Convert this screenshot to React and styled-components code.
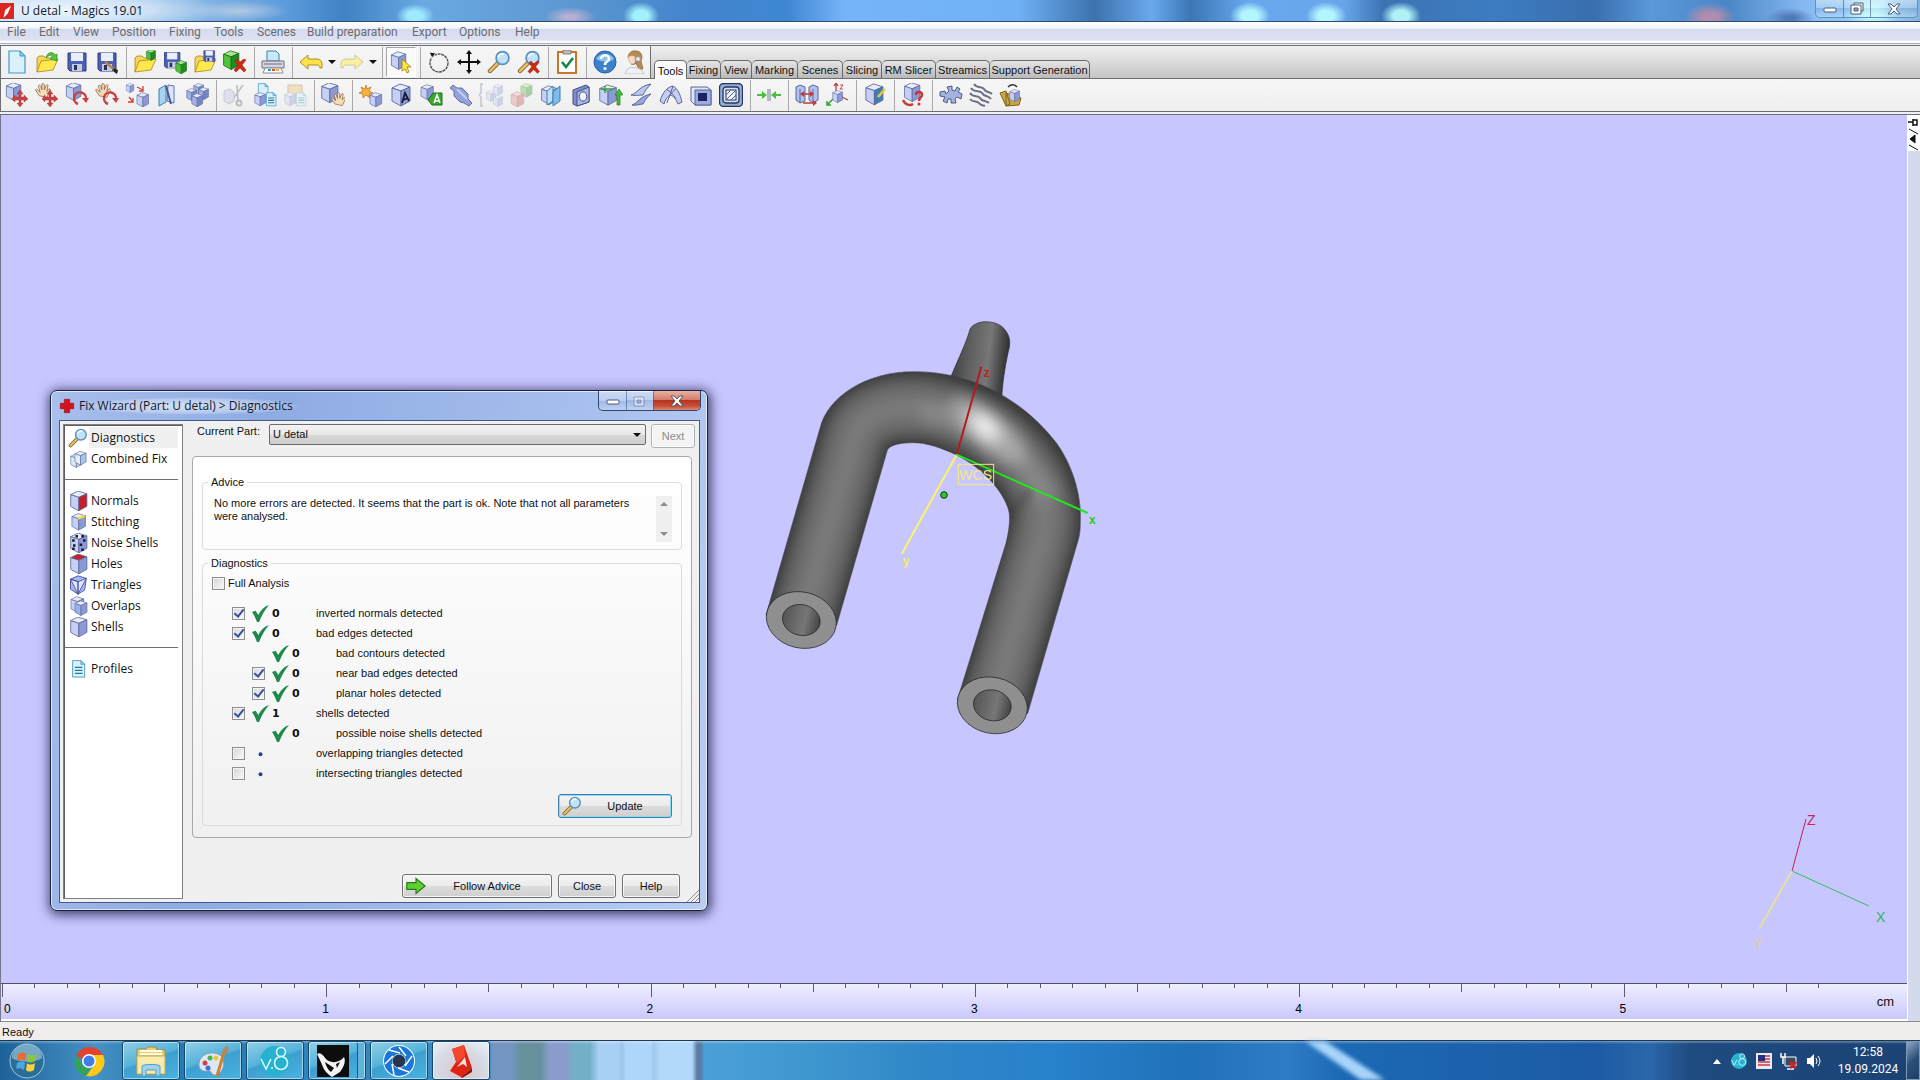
import React from 'react';
import styled, { createGlobalStyle, css } from 'styled-components';

const GlobalStyle = createGlobalStyle`
  * { box-sizing: border-box; }
  body {
    margin: 0;
    background: #f0f0f0;
    color: #111;
    font: 11px/13px "Liberation Sans", Arial, sans-serif;
  }
  button, select, input { font: inherit; color: inherit; margin: 0; }
`;

const uiFont = '"Open Sans", "Noto Sans", sans-serif';

/* ---------- icon parts, all on a 24 x 24 grid ---------- */

const Icon = styled.svg.attrs({ viewBox: '0 0 24 24', 'aria-hidden': true })`
  width: ${({ $size }) => $size || 24}px;
  height: ${({ $size }) => $size || 24}px;
  flex: none;
  display: block;
  opacity: ${({ $faded }) => ($faded ? 0.35 : 1)};
`;

const Cube = ({ x = 0, y = 0, s = 1, top = '#e6ecfd', left = '#c6cff6', right = '#8b99d6', line = '#5a6696' }) => (
  <g transform={`translate(${x} ${y}) scale(${s})`} stroke={line} strokeWidth="0.9" strokeLinejoin="round">
    <path d="M3 5 11 1 21 4 12 8Z" fill={top} />
    <path d="M3 5 12 8V23L3 18Z" fill={left} />
    <path d="M12 8 21 4V18L12 23Z" fill={right} />
  </g>
);

const GreenCube = (props) => <Cube top="#a6e88a" left="#4fc13a" right="#1f8c22" line="#17641b" {...props} />;

const Folder = ({ x = 0, y = 0, s = 1 }) => (
  <g transform={`translate(${x} ${y}) scale(${s})`} stroke="#a8851b" strokeWidth="0.8" strokeLinejoin="round">
    <path d="M2 22V8L4 6H9L11 8H18V12" fill="#f3d65a" />
    <path d="M2 22 6 11 23 9 18 20Z" fill="#ffe94f" />
  </g>
);

const Floppy = ({ x = 0, y = 0, s = 1 }) => (
  <g transform={`translate(${x} ${y}) scale(${s})`}>
    <path d="M3 3H21V21H5L3 19Z" fill="#4f60b4" stroke="#2c3a7c" />
    <path d="M6 3H18V11H6Z" fill="#e9eefb" />
    <path d="M7 14H17V21H7Z" fill="#c6cce0" />
    <path d="M9 15H12V20H9Z" fill="#27315f" />
  </g>
);

const RedX = ({ x = 0, y = 0, s = 1 }) => (
  <path
    transform={`translate(${x} ${y}) scale(${s})`}
    d="M1 2 3 0 6 3 10 0 12 1 8 6 12 11 10 13 6 9 2 13 0 11 4 6Z"
    fill="#cf2a12"
    stroke="#8e1a0c"
    strokeWidth="0.5"
  />
);

const RedMove = () => (
  <path
    d="M15 7 18 11H16V14H19V12L23 16 19 19V17H16V20H18L15 24 12 20H14V17H10V19L7 16 10 12V14H14V11H12Z"
    fill="#c94141"
    stroke="#a22c2c"
    strokeWidth="0.4"
  />
);

const RedTurn = () => (
  <g fill="none" stroke="#c84242" strokeWidth="2.4">
    <path d="M13 21A6 6 0 1 1 21 16" />
    <path d="M17 15H24L21 20Z" fill="#c84242" stroke="none" />
  </g>
);

const Hand = ({ x = 0, y = 0, s = 1 }) => (
  <path
    transform={`translate(${x} ${y}) scale(${s})`}
    d="M5 15 1 9C0 7 2 7 3 8L6 11 4 4C4 2 6 2 7 4L8 8V2C8 0 10 0 11 2V8L13 3C14 1 16 2 15 4L14 10 16 7C18 6 18 8 18 9L14 17Z"
    fill="#f7dcbb"
    stroke="#8a6344"
    strokeWidth="0.9"
    strokeLinejoin="round"
  />
);

const Lens = () => (
  <g>
    <path d="M11 13 3 21" stroke="#7a5d1e" strokeWidth="4.4" strokeLinecap="round" />
    <path d="M11 13 3 21" stroke="#e2bd6a" strokeWidth="2.8" strokeLinecap="round" />
    <circle cx="15.500" cy="8" r="6.400" fill="#bfe3fb" stroke="#5c8fc0" strokeWidth="1.700" />
    <path d="M11.500 7A4.500 4.500 0 0 1 17 4" fill="none" stroke="#fff" strokeWidth="1.600" />
  </g>
);

const Page = ({ x = 0, y = 0, s = 1, lines }) => (
  <g transform={`translate(${x} ${y}) scale(${s})`}>
    <path d="M4 1H15L20 6V23H4Z" fill="#d9f1fb" stroke="#3f9ac4" strokeWidth="1.200" />
    <path d="M15 1V6H20Z" fill="#8ccdea" stroke="#3f9ac4" />
    {lines && <path d="M7 10H17M7 14H17M7 18H17" stroke="#257b9e" strokeWidth="1.800" />}
  </g>
);

const icons = {
  newFile: <Page />,
  open: (
    <>
      <Folder />
      <path d="M11 8C12 2 18 1 20 5L22 4V11L15 9 17 7C16 4 14 5 11 8Z" fill="#58c63c" stroke="#2d8722" strokeWidth="0.7" />
    </>
  ),
  save: <Floppy />,
  saveAs: (
    <>
      <Floppy />
      <path d="M10 12 20 20" stroke="#b98148" strokeWidth="2.6" />
      <path d="M18 18 23 20 22 24 19 22Z" fill="#222" />
    </>
  ),
  openPart: (
    <>
      <Folder />
      <GreenCube x={12} y={-1} s={0.5} />
    </>
  ),
  savePart: (
    <>
      <Floppy s={0.85} x={-1} />
      <GreenCube x={11} y={10} s={0.6} />
    </>
  ),
  saveFolder: (
    <>
      <Folder />
      <Floppy x={9} y={-1} s={0.6} />
    </>
  ),
  unload: (
    <>
      <GreenCube s={0.85} x={-2} />
      <RedX x={11} y={9} />
    </>
  ),
  print: (
    <>
      <path d="M6 11V1H15L18 4V11Z" fill="#c8e9fb" stroke="#3e7fa8" />
      <path d="M1 11H23V18H1Z" fill="#d5d7de" stroke="#6c6f7d" />
      <path d="M3 14H21" stroke="#6c6f7d" />
      <path d="M4 18H20L22 23H2Z" fill="#fff" stroke="#8a8d98" />
      <path d="M7 20H10" stroke="#2d9fd8" strokeWidth="2" />
      <path d="M11 20H14" stroke="#e0493f" strokeWidth="2" />
      <path d="M15 20H18" stroke="#f0b82c" strokeWidth="2" />
    </>
  ),
  undo: <path d="M1 12 9 5V9H18C21 9 23 11 23 14V18H21C21 16 20 15 18 15H9V19Z" fill="#ffe24a" stroke="#a3851d" strokeWidth="0.9" />,
  redo: <path d="M23 12 15 5V9H6C3 9 1 11 1 14V18H3C3 16 4 15 6 15H15V19Z" fill="#f8efa0" stroke="#cdc493" strokeWidth="0.9" />,
  select: (
    <>
      <Cube s={0.8} x={0} y={1} />
      <path d="M13 9 22 17H18L20 22 18 23 16 19 13 21Z" fill="#ffe23a" stroke="#8d7412" strokeWidth="0.7" />
    </>
  ),
  rotate: (
    <>
      <circle cx="12" cy="13" r="9" fill="none" stroke="#555" strokeWidth="1.400" strokeDasharray="3 0.7" />
      <path d="M2 2 9 3 5 8Z" fill="#111" stroke="#f1f1f1" />
    </>
  ),
  pan: (
    <path
      d="M12 0 15 4H13V11H20V9L24 12 20 15V13H13V20H15L12 24 9 20H11V13H4V15L0 12 4 9V11H11V4H9Z"
      fill="#111"
    />
  ),
  zoom: <Lens />,
  unzoom: (
    <>
      <Lens />
      <RedX x={11} y={11} s={0.95} />
    </>
  ),
  checklist: (
    <>
      <path d="M3 2H21V23H3Z" fill="#fff" stroke="#c9762b" strokeWidth="2" />
      <path d="M8 0H16V4H8Z" fill="#b8bcc6" stroke="#7d6a55" strokeWidth="0.8" />
      <path d="M7 12 11 17 18 8" fill="none" stroke="#138648" strokeWidth="2.6" />
    </>
  ),
  help: (
    <>
      <circle cx="12" cy="12" r="11" fill="#3b82cc" stroke="#2a619f" />
      <path d="M3 9A10 9 0 0 1 21 9C17 13 8 12 3 9Z" fill="#8fc0ee" />
      <path d="M8 9C8 4 16 4 16 9C16 12 12 11 12 15" fill="none" stroke="#fff" strokeWidth="2.600" />
      <circle cx="12" cy="18.500" r="1.600" fill="#fff" />
    </>
  ),
  agent: (
    <>
      <path d="M5 8C5 3 9 0 13 1C19 1 20 7 18 11L20 19H16L12 12Z" fill="#b98a50" stroke="#8d6534" strokeWidth="0.7" />
      <path d="M5 7C8 6 11 5 12 7L12 14C9 16 6 13 5 7Z" fill="#f8dcc2" stroke="#c69b76" strokeWidth="0.500" />
      <circle cx="15" cy="9" r="2.500" fill="#e4e7ee" stroke="#8d8d98" strokeWidth="0.800" />
      <path d="M2 24C4 18 8 16 11 18C16 17 19 20 21 24Z" fill="#eef1f6" stroke="#a9adb8" strokeWidth="0.7" />
      <path d="M8 14C11 15 14 13 15 11" fill="none" stroke="#777" />
    </>
  ),
  translate: (
    <>
      <Cube s={0.8} x={-1} y={-1} />
      <RedMove />
    </>
  ),
  panPart: (
    <>
      <Hand s={0.85} />
      <RedMove />
    </>
  ),
  rotatePart: (
    <>
      <Cube s={0.8} x={-1} y={-1} />
      <RedTurn />
    </>
  ),
  turnPart: (
    <>
      <Hand s={0.85} />
      <RedTurn />
    </>
  ),
  rescale: (
    <>
      <Cube s={0.42} x={0} y={0} />
      <Cube s={0.65} x={10} y={9} />
      <path d="M12 4 18 7M18 3V8H14M4 14 8 19M3 19H8V15" fill="none" stroke="#c84242" strokeWidth="1.300" />
    </>
  ),
  mirror: (
    <>
      <path d="M4 6 11 2V19L4 23Z" fill="#a8d3f3" stroke="#4479ae" />
      <path d="M13 2 19 3V20L12 18Z" fill="#dfe6fb" stroke="#5b73b4" />
      <path d="M11 3 16 21" stroke="#44579c" strokeWidth="2" />
    </>
  ),
  duplicate: (
    <>
      <Cube s={0.55} x={7} y={0} right="#7585c6" left="#a3b0e6" />
      <Cube s={0.55} x={0} y={5} right="#7585c6" left="#a3b0e6" />
      <Cube s={0.55} x={12} y={4} right="#7585c6" left="#a3b0e6" />
      <Cube s={0.6} x={5} y={10} right="#7585c6" left="#a3b0e6" />
    </>
  ),
  cut: (
    <>
      <path d="M8 19 20 2M15 19 14 2" stroke="#555c6e" strokeWidth="1.600" />
      <path d="M1 8 7 6 11 9V18L6 21 1 18Z" fill="#b9c2e2" stroke="#777f9a" />
      <circle cx="16" cy="20" r="2.500" fill="none" stroke="#555c6e" strokeWidth="2" />
    </>
  ),
  copy: (
    <>
      <Page s={0.6} x={3} />
      <Cube s={0.6} x={0} y={9} />
      <Page s={0.6} x={11} y={9} lines />
    </>
  ),
  paste: (
    <>
      <path d="M5 2H19V20H5Z" fill="#edbe5e" stroke="#987133" />
      <Cube s={0.6} x={0} y={9} />
      <Page s={0.6} x={11} y={9} lines />
    </>
  ),
  pick: (
    <>
      <Cube s={0.9} x={-2} y={-1} />
      <Hand s={0.8} x={10} y={9} />
    </>
  ),
  create: (
    <>
      <path d="M7 2 8 6 12 4 10 8 14 10 10 11 11 15 7 12 4 15 4 11 0 10 4 8 2 4 6 6Z" fill="#f7b53a" stroke="#bb6a18" strokeWidth="0.7" />
      <Cube s={0.65} x={9} y={9} />
    </>
  ),
  emboss: (
    <>
      <Cube />
      <path d="M13 20 16 10 20 18M14 17 19 15" fill="none" stroke="#151a33" strokeWidth="1.800" />
    </>
  ),
  label: (
    <>
      <Cube s={0.68} y={1} />
      <path d="M9 17 14 10H23V22H13Z" fill="#3ca62f" stroke="#1f701c" />
      <path d="M15 20 18 12 21 20M16 18H20" fill="none" stroke="#fff" strokeWidth="1.500" />
    </>
  ),
  shaft: (
    <>
      <path d="M1 5 4 2 8 5 13 5 19 11 19 16 23 20 20 23 15 20 11 19 5 13 5 8Z" fill="#93a2dc" stroke="#5a6696" strokeWidth="0.9" />
      <path d="M8 6 18 16" stroke="#c3cdf3" strokeWidth="2" />
    </>
  ),
  arrange: (
    <>
      <path d="M4 1H2V10L0 12 2 14V23H4" fill="none" stroke="#68718f" strokeWidth="1.500" />
      <Cube s={0.5} x={6} y={7} />
      <Cube s={0.5} x={13} y={1} />
      <Cube s={0.5} x={13} y={12} />
    </>
  ),
  boolean: (
    <>
      <GreenCube s={0.62} x={10} />
      <Cube s={0.7} y={8} top="#f2b0b0" left="#e18181" right="#c34a4a" line="#8c3434" />
    </>
  ),
  section: (
    <>
      <Cube s={0.85} y={2} />
      <path d="M8 8 14 3V18L8 22Z" fill="#bfe0f8" stroke="#3f7fb4" />
      <path d="M14 9 21 3V18L14 23Z" fill="#7dbdec" stroke="#3f7fb4" />
    </>
  ),
  perforate: (
    <>
      <path d="M4 7 17 2 20 4V19L8 23 4 21Z" fill="#7e8cc9" stroke="#47527f" />
      <path d="M8 9 20 4V19L8 23Z" fill="#aab7ea" stroke="#47527f" />
      <ellipse cx="14" cy="13.500" rx="3.800" ry="4.600" fill="#eef2fc" stroke="#47527f" />
    </>
  ),
  extrude: (
    <>
      <Cube s={0.92} x={-2} y={1} top="#dff5df" />
      <path d="M2 6H14M6 3V10" stroke="#2f9e34" strokeWidth="1.300" />
      <path d="M20 6 24 12H21V22H18V12H16Z" fill="#42bb3a" stroke="#22801f" strokeWidth="0.7" />
    </>
  ),
  offset: (
    <>
      <path d="M2 12C9 10 10 3 22 1C18 5 16 8 14 12C9 12 6 13 2 12Z" fill="#bac8f0" stroke="#5a6696" />
      <path d="M3 22C9 20 11 13 22 11C17 15 16 18 14 21C10 21 7 23 3 22Z" fill="#94a5df" stroke="#5a6696" />
    </>
  ),
  thicken: (
    <>
      <path d="M1 18C4 9 8 4 14 3C19 6 21 11 23 19L19 21C17 16 15 13 11 12C8 14 6 17 5 21Z" fill="#c6cff6" stroke="#5a6696" />
      <path d="M14 3 11 12M17 6C13 8 9 15 8 20M8 7C11 8 14 11 17 16" fill="none" stroke="#5a6696" />
    </>
  ),
  hollow: (
    <>
      <path d="M2 4H18L22 7V22H6L2 18Z" fill="#dfe6fb" stroke="#5a6696" />
      <path d="M6 7H22V22H6Z" fill="#9dacdf" stroke="#5a6696" />
      <path d="M9 10H18V18H9Z" fill="#1c2563" />
    </>
  ),
  shell: (
    <>
      <rect x="0.500" y="0.500" width="23" height="23" rx="4" fill="#93acd6" stroke="#27365e" strokeWidth="1.300" />
      <rect x="4" y="4" width="16" height="16" rx="3" fill="#d5e0f4" stroke="#27365e" strokeWidth="1.300" />
      <rect x="7" y="7" width="10" height="10" fill="#eef3fc" stroke="#27365e" />
      <path d="M7 12 12 7M7 17 17 7M12 17 17 12" stroke="#4e6396" />
    </>
  ),
  gap: (
    <>
      <path d="M0 11H5V8L10 12 5 16V13H0ZM24 11H19V8L14 12 19 16V13H24Z" fill="#4cbf3f" />
      <path d="M11 6V18M13 6V18" stroke="#8b93a8" strokeWidth="1.200" />
    </>
  ),
  measure: (
    <>
      <path d="M1 4 5 2 10 4V18L5 20 1 17Z" fill="#b4c0ef" stroke="#5a6696" />
      <path d="M14 4 18 2 23 4V17L18 20 14 17Z" fill="#b4c0ef" stroke="#5a6696" />
      <path d="M5 6V19M18 6V19" stroke="#5a6696" />
      <path d="M7 11H16M8 20H18" stroke="#c33a3a" strokeWidth="1.600" />
      <path d="M5 11 9 8V14ZM19 11 15 8V14ZM22 20 18 17V23Z" fill="#c33a3a" />
    </>
  ),
  axes: (
    <>
      <path d="M11 9V1M9 3 11 0 13 3M17 14 23 17" fill="none" stroke="#c33a3a" strokeWidth="1.300" />
      <path d="M8 16 2 22M2 18V22H6" fill="none" stroke="#2f9e34" strokeWidth="1.500" />
      <path d="M15 2H18L15 6H18" fill="none" stroke="#c33a3a" strokeWidth="0.900" />
      <Cube s={0.55} x={6} y={7} />
    </>
  ),
  sketch: (
    <>
      <Cube s={0.95} right="#3f7fb4" />
      <path d="M15 14 22 6" stroke="#e8c93c" strokeWidth="2.600" />
    </>
  ),
  query: (
    <>
      <Cube s={0.85} x={1} y={-1} />
      <path d="M2 17C4 22 9 23 12 21" fill="none" stroke="#c93a3a" strokeWidth="2.400" />
      <path d="M15 12C15 8 21 8 21 12C21 15 18 14 18 18" fill="none" stroke="#d03030" strokeWidth="2.400" />
      <circle cx="18" cy="21" r="1.500" fill="#d03030" />
    </>
  ),
  gear: (
    <path
      d="M1 9 6 8 7 11 10 8 8 4 13 3 13 7 16 8 18 4 21 6 19 9 23 11 22 16 18 14 16 16 17 20 12 20 12 16 9 16 8 20 4 18 6 14 1 13Z"
      fill="#a5b2e0"
      stroke="#4c5886"
      strokeLinejoin="round"
    />
  ),
  waves: (
    <path
      d="M5 1C8 6 13 3 15 6C17 10 20 8 23 11M2 5C5 10 11 7 13 10C15 14 19 12 22 16M1 10C4 15 9 12 11 15C13 19 17 17 20 20M1 16C4 20 8 17 10 20C12 23 14 22 16 23"
      fill="none"
      stroke="#6a6f85"
      strokeWidth="2"
    />
  ),
  package: (
    <>
      <path d="M1 10 7 8 11 21 7 23ZM7 10 22 15 20 22 7 23Z" fill="#c9a545" stroke="#7b6321" />
      <Cube s={0.55} x={9} y={6} />
      <path d="M9 4C12 1 16 1 18 4" fill="none" stroke="#333" strokeWidth="1.500" />
    </>
  ),
};

/* ---------- application frame ---------- */

const Shell = styled.div`
  min-height: 100vh;
  display: flex;
  flex-direction: column;
`;

const TitleBar = styled.header`
  height: 22px;
  display: flex;
  align-items: center;
  border-bottom: 1px solid #2f4a6e;
  font: 12px/18px ${uiFont};
  color: #10182a;
  background:
    radial-gradient(ellipse 160px 22px at 60px 10px, rgba(240, 248, 255, 0.95), rgba(225, 238, 250, 0.75) 55%, transparent),
    radial-gradient(ellipse 50px 10px at 240px 11px, rgba(205, 215, 230, 0.7), transparent),
    radial-gradient(ellipse 19px 12px at 415px 16px, #9deaff 40%, transparent),
    radial-gradient(ellipse 26px 10px at 570px 17px, #b8b0d4 20%, transparent),
    radial-gradient(ellipse 18px 14px at 641px 16px, #a2f0fc 40%, transparent),
    radial-gradient(ellipse 20px 14px at 1250px 16px, #b4f6ff 40%, transparent),
    radial-gradient(ellipse 20px 14px at 1326px 16px, #b4f6ff 40%, transparent),
    radial-gradient(ellipse 20px 14px at 1401px 16px, #b0f0f6 40%, transparent),
    radial-gradient(ellipse 26px 14px at 1710px 17px, #b08cae 30%, transparent),
    radial-gradient(ellipse 24px 10px at 1790px 18px, #4f7ab8 20%, transparent),
    radial-gradient(ellipse 26px 20px at 1872px 12px, #c4fafd 20%, transparent),
    linear-gradient(90deg, #b5d2ee 0, #8ab8e6 10%, #5a9adb 15%, #3f83c4 18%, #6aa9e2 22%, #5d97cf 30%, #4384cd 36%, #3f87d2 41%, #75b4fa 44%, #70b1f6 53%, #3c72ad 57%, #6aa9ee 60%, #3b76b5 62%, #68a8ee 65%, #68a6ea 70%, #3c74b3 72%, #3c7cc2 78%, #3a6eae 83%, #5a98da 86%, #4a86c6 90%, #86b9f1 94%, #9ad3f5 98%, #84b2e0 100%);
`;

const AppLogo = styled(Icon)`
  width: 14px;
  height: 16px;
  margin: 0 7px 0 0;
`;

const Caption = styled.h1`
  margin: 0;
  font: inherit;
  flex: 1;
`;

const WindowControls = styled.div`
  display: flex;
  align-self: flex-start;
  margin-right: 2px;
  height: ${({ $inner }) => ($inner ? 20 : 18)}px;
  border: 1px solid ${({ $inner }) => ($inner ? '#33466f' : '#5c93bd')};
  border-top: 0;
  border-radius: 0 0 5px 5px;
  overflow: hidden;
`;

const ControlButton = styled.button`
  width: ${({ $close }) => ($close ? 47 : 27)}px;
  padding: 0;
  display: grid;
  place-items: center;
  border: 0;
  border-left: ${({ $first }) => ($first ? 0 : 1)}px solid rgba(60, 90, 140, 0.6);
  background: linear-gradient(rgba(255, 255, 255, 0.4), rgba(255, 255, 255, 0.2) 50%, rgba(60, 100, 170, 0.1) 50%, rgba(255, 255, 255, 0.25));
  ${({ $red }) => $red && css`
    background: linear-gradient(#e9b0a3, #d27a69 48%, #b9331c 50%, #c9503a 80%, #dc8a6e);
  `}
`;

const MenuBar = styled.nav`
  height: 22px;
  display: flex;
  align-items: center;
  padding: 0 0 2px 7px;
  gap: 14px;
  border-bottom: 1px solid #a7a9ba;
  background: linear-gradient(#fff, #f1f4fa 30%, #d6dcef 34%, #dde2f2 85%, #fff 95%);
`;

const MenuItem = styled.button`
  width: ${({ $width }) => $width}px;
  padding: 0;
  border: 0;
  background: none;
  text-align: left;
  white-space: nowrap;
  font: 12px/18px Roboto, sans-serif;
  color: #6c6c70;
`;

const ToolRow = styled.div`
  height: 33px;
  display: flex;
  border-top: 1px solid #6d6e72;
  border-left: 1px solid #6d6e72;
  padding-left: 1px;
  background: linear-gradient(#f6f6f6, #efefef);
`;

const ToolArea = styled.div`
  margin-top: 1px;
  padding-bottom: 2px;
  border-bottom: 1px solid #686a7d;
`;

const ToolEnd = styled.div`
  border-bottom: 1px solid #6d6e72;
`;

const ToolGroup = styled.div`
  display: flex;
  align-items: center;
  & + &::before {
    content: '';
    width: 1px;
    height: 31px;
    margin: 0 3px 0 4px;
    background: #a9a9a9;
  }
`;

const ToolButton = styled.button`
  width: 30px;
  height: 30px;
  padding: 0;
  display: grid;
  place-items: center;
  border: 1px solid;
  border-color: ${({ $pressed }) => ($pressed ? '#a5a5a5 #fff #fff #a5a5a5' : 'transparent')};
  background: ${({ $pressed }) => ($pressed ? '#fafafa' : 'none')};
`;

const DropArrow = styled.button`
  width: 11px;
  height: 30px;
  padding: 0;
  border: 0;
  background: none;
  display: grid;
  place-items: center;
  &::before {
    content: '';
    border: 4px solid transparent;
    border-top-color: #111;
    border-bottom: 0;
  }
`;

const TabStrip = styled.div`
  flex: 1;
  display: flex;
  align-items: flex-end;
  padding-left: 3px;
  border-left: 1px solid #6d6e72;
  background: linear-gradient(#f0f0f0, #c6c6c6);
`;

const Tab = styled.button`
  width: ${({ $width }) => $width}px;
  height: ${({ $active }) => ($active ? 19 : 18)}px;
  margin-bottom: ${({ $active }) => ($active ? -1 : 0)}px;
  padding: 2px 0 0;
  border: 1px solid #6a6a6a;
  border-bottom: 0;
  border-left-width: ${({ $active }) => ($active ? 1 : 0)}px;
  border-radius: 5px 5px 0 0;
  background: ${({ $active }) => ($active ? '#fbfbfb' : 'linear-gradient(#e6e6e6, #b9b9b9)')};
  white-space: nowrap;
  color: #111;
`;

const fileTools = [
  [['New', 'newFile'], ['Open', 'open'], ['Save', 'save'], ['Save as', 'saveAs']],
  [['Import part', 'openPart'], ['Save part', 'savePart'], ['Save part as', 'saveFolder'], ['Unload part', 'unload']],
  [['Print', 'print']],
  [['Undo', 'undo', 'drop'], ['Redo', 'redo', 'drop']],
  [['Select', 'select', 'pressed']],
  [['Rotate view', 'rotate'], ['Pan view', 'pan'], ['Zoom', 'zoom'], ['Unzoom', 'unzoom']],
  [['Checklist', 'checklist']],
  [['Help topics', 'help'], ['Support', 'agent']],
];

const partTools = [
  [['Translate', 'translate'], ['Pick and place', 'panPart'], ['Rotate', 'rotatePart'], ['Free rotate', 'turnPart'], ['Rescale', 'rescale'], ['Mirror', 'mirror'], ['Duplicate', 'duplicate']],
  [['Cut', 'cut', 'faded'], ['Copy', 'copy'], ['Paste', 'paste', 'faded']],
  [['Pick part', 'pick']],
  [['Create', 'create'], ['Emboss', 'emboss'], ['Label', 'label'], ['Shaft', 'shaft'], ['Arrange', 'arrange', 'faded'], ['Boolean', 'boolean', 'faded'], ['Section', 'section'], ['Perforate', 'perforate'], ['Extrude', 'extrude'], ['Offset', 'offset'], ['Thicken', 'thicken'], ['Hollow', 'hollow'], ['Shell', 'shell']],
  [['Close gap', 'gap']],
  [['Measure', 'measure'], ['Axes', 'axes']],
  [['Sketch', 'sketch']],
  [['Part info', 'query']],
  [['Settings', 'gear'], ['Texture', 'waves'], ['Package', 'package']],
];

const menus = [
  ['File', 18], ['Edit', 20], ['View', 25], ['Position', 43], ['Fixing', 31], ['Tools', 29], ['Scenes', 36],
  ['Build preparation', 91], ['Export', 33], ['Options', 42], ['Help', 26],
];

const tabs = [
  ['Tools', 33], ['Fixing', 34], ['View', 31], ['Marking', 46], ['Scenes', 45], ['Slicing', 39],
  ['RM Slicer', 54], ['Streamics', 54], ['Support Generation', 100],
];

const Tools = ({ groups }) => groups.map((group) => (
  <ToolGroup key={group[0][0]}>
    {group.map(([name, icon, mode]) => (
      <React.Fragment key={name}>
        <ToolButton aria-label={name} $pressed={mode === 'pressed'} disabled={mode === 'faded'}>
          <Icon $faded={mode === 'faded'}>{icons[icon]}</Icon>
        </ToolButton>
        {mode === 'drop' && <DropArrow aria-label={`${name} history`} />}
      </React.Fragment>
    ))}
  </ToolGroup>
));

const Controls = ({ inner }) => (
  <WindowControls $inner={inner}>
    <ControlButton $first aria-label="Minimize">
      <svg width="14" height="8"><rect x="1" y="3" width="12" height="4" rx="1" fill="#fff" stroke="#4b5a74" /></svg>
    </ControlButton>
    <ControlButton aria-label="Restore" disabled={inner}>
      <svg width="14" height="13" opacity={inner ? 0.45 : 1} fill="#fff" stroke="#4b5a74">
        {!inner && <path d="M4 1H13V9H4Z" />}
        <path d="M1 3H11V12H1Z" />
        <path d="M4 6H8V9H4Z" fill="#8aa6cc" />
      </svg>
    </ControlButton>
    <ControlButton $close $red={inner} aria-label="Close window">
      <svg width="14" height="12">
        <path d="M1 1H4L7 4 10 1H13L9 6 13 11H10L7 8 4 11H1L5 6Z" fill="#fff" stroke="#4b5a74" />
      </svg>
    </ControlButton>
  </WindowControls>
);

/* ---------- workspace ---------- */

const Workspace = styled.main`
  flex: 1;
  display: flex;
  border-left: 1px solid #77778c;
  border-bottom: 1px solid #8b8b93;
`;

const SceneColumn = styled.div`
  flex: 1;
  display: flex;
  flex-direction: column;
  padding-bottom: 2px;
  background: #fff;
`;

const Scene = styled.section`
  flex: 1;
  position: relative;
  overflow: hidden;
  min-height: 860px;
  background: #c7c6ff;
`;

const ModelDrawing = styled.svg`
  position: absolute;
  left: 739px;
  top: 185px;
  width: 380px;
  height: 450px;
`;

const AxesDrawing = styled.svg`
  position: absolute;
  right: 17px;
  bottom: 27px;
  width: 150px;
  height: 150px;
`;

const Ruler = styled.svg`
  display: block;
  width: 100%;
  height: 35px;
  background: linear-gradient(#efeeff, #c9c8fd);
`;

const RulerRow = styled.div`
  position: relative;
  border-top: 1px solid #50506e;
`;

const Unit = styled.span`
  position: absolute;
  right: 13px;
  top: 10px;
  font: 13px/16px "Liberation Sans", sans-serif;
`;

const DockStrip = styled.aside`
  width: 13px;
  background: #d3daec;
  border-left: 1px solid #fff;
`;

const DockHandle = styled.svg`
  display: block;
  background: #fff;
`;

const legs = 'M184 960 343 412C365 345 440 322 520 322C700 330 905 470 914 650C914 690 905 715 900 735L757 1216';
const body = 'M78 945 240 385C262 290 380 215 520 215C700 215 850 300 950 430C1000 500 1024 590 1021 660C1021 680 1020 700 1016 715L863 1240 757 1290 652 1200 798 730C808 690 810 660 808 640C800 590 740 510 650 465C600 442 560 428 520 428C490 428 450 432 442 450L290 975 184 1040Z';
const neck = 'M632 232C658 170 680 125 690 88C704 57 775 57 797 92C808 107 811 122 808 142C800 175 788 235 785 296L700 300Z';

const Model = () => (
  <ModelDrawing viewBox="0 0 1140 1350" role="img" aria-label="U shaped pipe with coordinate axes">
    <defs>
      <clipPath id="bodyClip"><path d={body} /></clipPath>
      <filter id="soft" x="-20%" y="-20%" width="140%" height="140%"><feGaussianBlur stdDeviation="13" /></filter>
      <filter id="softer" x="-60%" y="-60%" width="220%" height="220%"><feGaussianBlur stdDeviation="22" /></filter>
      <linearGradient id="neckShade" x1="0" x2="1" y1="0.1" y2="0.25">
        <stop offset="0" stopColor="#393939" />
        <stop offset="0.35" stopColor="#5e5e5e" />
        <stop offset="0.68" stopColor="#777" />
        <stop offset="0.88" stopColor="#4a4a4a" />
        <stop offset="1" stopColor="#303030" />
      </linearGradient>
      <linearGradient id="bore"><stop offset="0" stopColor="#555" /><stop offset="0.6" stopColor="#777" /><stop offset="1" stopColor="#444" /></linearGradient>
    </defs>
    <path d={neck} fill="url(#neckShade)" stroke="#2e2e2e" strokeWidth="2" />
    <g clipPath="url(#bodyClip)">
      <path d={body} fill="#3b3b3b" />
      <g fill="none" strokeLinejoin="round" filter="url(#soft)">
        <path d={legs} stroke="#525252" strokeWidth="195" />
        <path d={legs} stroke="#646464" strokeWidth="155" />
        <path d={legs} stroke="#707070" strokeWidth="110" />
        <path d={legs} stroke="#797979" strokeWidth="50" />
      </g>
      <path d="M540 335C690 340 850 450 930 600" fill="none" stroke="#8f8f8f" strokeWidth="60" opacity="0.7" filter="url(#softer)" />
      <ellipse cx="745" cy="390" rx="140" ry="52" transform="rotate(40 745 390)" fill="#b9b9b9" opacity="0.7" filter="url(#softer)" />
      <ellipse cx="735" cy="380" rx="56" ry="27" transform="rotate(42 735 380)" fill="#fff" opacity="0.9" filter="url(#softer)" />
      <path d="M442 350V450" stroke="#3a3a3a" strokeWidth="14" opacity="0.45" filter="url(#soft)" />
      <path d="M808 650 870 570" stroke="#333" strokeWidth="16" opacity="0.5" filter="url(#soft)" />
    </g>
    <path d={body} fill="none" stroke="#3c3c3c" strokeWidth="2" />
    {[[184, 960], [757, 1216]].map(([cx, cy]) => (
      <g key={cx} transform={`rotate(13 ${cx} ${cy})`} stroke="#1d1d1d" strokeWidth="2">
        <ellipse cx={cx} cy={cy} rx="106" ry="84" fill="#8f8f8f" />
        <ellipse cx={cx} cy={cy} rx="57" ry="46" fill="url(#bore)" />
      </g>
    ))}
    <g strokeWidth="6" fill="none">
      <path d="M650 464 724 200" stroke="#b51b1b" />
      <path d="M650 464 485 762" stroke="#fbf46a" />
      <path d="M650 464 1043 639" stroke="#22e522" />
      <rect x="655" y="493" width="106" height="61" stroke="#f3ea78" strokeWidth="3" />
    </g>
    <circle cx="612" cy="585" r="10" fill="#2fc32f" stroke="#123c12" strokeWidth="3" />
    <g fontFamily="Liberation Sans, sans-serif" fontSize="42">
      <text x="658" y="539" fill="#f0e88a">WCS</text>
      <g fontWeight="bold" fontSize="36">
        <text x="731" y="230" fill="#c32020">z</text>
        <text x="488" y="795" fill="#f4ee58">y</text>
        <text x="1047" y="671" fill="#22d022">x</text>
      </g>
    </g>
  </ModelDrawing>
);

const AxisTriad = () => (
  <AxesDrawing viewBox="0 0 150 150" role="img" aria-label="View orientation">
    <g fill="none">
      <path d="M52 65 66 13" stroke="#d01f4c" />
      <path d="M52 65 129 100" stroke="#2fc05c" />
      <path d="M52 65 19 123" stroke="#e6dfa2" strokeWidth="2" />
    </g>
    <g fontFamily="Liberation Sans, sans-serif" fontSize="14">
      <text x="67" y="19" fill="#c3245a">Z</text>
      <text x="136" y="116" fill="#2fb55c">X</text>
      <text x="14" y="142" fill="#ddd59a">Y</text>
    </g>
  </AxesDrawing>
);

const cmWidth = 324.3;

const RulerScale = () => (
  <RulerRow>
    <Ruler role="img" aria-label="Scale in centimetres">
      {Array.from({ length: 57 }, (_, i) => {
        const x = Math.round((i * cmWidth) / 10) + 1;
        const length = i % 10 === 0 ? 13 : i % 5 === 0 ? 8 : 4;
        return <path key={i} d={`M${x + 0.5} 0V${length}`} stroke="#5a5a78" />;
      })}
      {[0, 1, 2, 3, 4, 5].map((n) => (
        <text key={n} x={n * cmWidth + (n ? -3 : 3)} y="29" fontFamily="Liberation Sans, sans-serif" fontSize="12">{n}</text>
      ))}
    </Ruler>
    <Unit>cm</Unit>
  </RulerRow>
);

const Dock = () => (
  <DockStrip>
    <DockHandle width="12" height="36" fill="none" stroke="#111">
      <path d="M0 7H5M5 4V11M5 5H9V10H5" strokeWidth="1.500" />
      <path d="M1 14 10 19M1 30 10 35" />
      <path d="M2 24 7 20V28Z" fill="#111" />
    </DockHandle>
  </DockStrip>
);

/* ---------- fix wizard ---------- */

const Dialog = styled.section`
  position: absolute;
  left: 49px;
  top: 275px;
  width: 658px;
  padding: 0 7px 7px 8px;
  border: 1px solid #18223c;
  border-radius: 7px;
  background: linear-gradient(100deg, #a9bfec, #8eabe2 30%, #9db7e9 55%, #b9cdf2);
  box-shadow: inset 0 0 0 1px rgba(255, 255, 255, 0.65), 1px 2px 12px 2px rgba(20, 20, 60, 0.75);
`;

const DialogTitle = styled.div`
  height: 29px;
  display: flex;
  align-items: center;
  font: 12px/18px ${uiFont};
  & > ${WindowControls} { margin-right: -1px; }
`;

const DialogCaption = styled.h2`
  margin: 0 auto 0 4px;
  padding-right: 10px;
  font: inherit;
  color: #10182a;
  background: radial-gradient(closest-side, rgba(255, 255, 255, 0.6), rgba(255, 255, 255, 0.3) 75%, transparent);
`;

const Client = styled.div`
  display: flex;
  gap: 9px;
  padding: 3px 4px 3px 3px;
  border: 1px solid #44588c;
  background: #f0f0f0;
`;

const PageList = styled.ul`
  width: 120px;
  margin: 0;
  padding: 2px 4px 0 3px;
  list-style: none;
  border: 1px solid #808080;
  box-shadow: inset 1px 1px 0 #5d5d5d;
  background: #fff;
`;

const PageButton = styled.button`
  width: 100%;
  height: 21px;
  padding: 0;
  display: flex;
  align-items: center;
  border: 0;
  background: ${({ $active }) => ($active ? 'linear-gradient(90deg, #fff 22px, #f0f0f0 22px)' : 'none')};
  font: 12px/18px ${uiFont};
  color: #111;
  & > svg { margin: 0 3px 0 1px; }
`;

const ListRule = styled.li`
  height: 21px;
  display: flex;
  align-items: center;
  &::before { content: ''; flex: 1; height: 1px; background: #707070; margin-left: -2px; }
`;

const WizardBody = styled.div`
  flex: 1;
`;

const PartRow = styled.div`
  display: flex;
  height: 23px;
  padding-left: 5px;
`;

const PartLabel = styled.label`
  width: 72px;
  line-height: 14px;
`;

const SelectBox = styled.div`
  flex: 1;
  position: relative;
  margin-right: 5px;
  &::after {
    content: '';
    position: absolute;
    right: 5px;
    top: 9px;
    border: 4px solid transparent;
    border-top-color: #111;
    border-bottom: 0;
  }
`;

const Select = styled.select`
  appearance: none;
  width: 100%;
  height: 21px;
  padding: 0 3px;
  border: 1px solid #6c6c6c;
  border-radius: 2px;
  background: linear-gradient(#f3f3f3, #e8e8e8 50%, #d8d8d8 52%, #cecece);
  color: #111;
`;

const PushButton = styled.button`
  width: ${({ $width }) => $width}px;
  height: 24px;
  padding: 0 3px;
  display: flex;
  align-items: center;
  border: 1px solid #707070;
  border-radius: 3px;
  background: linear-gradient(#f4f4f4, #ececec 48%, #dcdcdc 52%, #cfcfcf);
  box-shadow: inset 0 0 0 1px rgba(255, 255, 255, 0.8);
  color: #111;
  & > span { flex: 1; }
  ${({ $focused }) => $focused && css`
    border-color: #3c7fb1;
    box-shadow: inset 0 0 0 1px #86dcf4;
  `}
  &:disabled {
    border-color: #adb2b5;
    background: #f4f4f4;
    color: #8b8b8b;
  }
`;

const Panel = styled.div`
  width: 500px;
  margin-top: 9px;
  padding: 18px 9px 11px;
  border: 1px solid #a8a8a8;
  border-radius: 4px;
  background: linear-gradient(#fff, #fdfdfd 20%, #f0f0f0);
`;

const Group = styled.fieldset`
  margin: 0 0 ${({ $gap }) => $gap || 0}px;
  padding: ${({ $top }) => $top}px 9px 7px;
  border: 1px solid #d9dcdf;
  border-radius: 4px;
  min-width: 0;
`;

const Legend = styled.legend`
  padding: 0 3px;
  margin-left: -4px;
  line-height: 14px;
`;

const AdviceBox = styled.div`
  display: flex;
  height: 46px;
  padding-left: 2px;
`;

const AdviceText = styled.p`
  flex: 1;
  margin: 0;
  padding: 1px 20px 0 0;
`;

const ScrollTrack = styled.div`
  width: 16px;
  display: flex;
  flex-direction: column;
  justify-content: space-between;
  align-items: center;
  padding: 6px 0;
  background: #f0f0f0;
`;

const ScrollArrow = styled.i`
  border: 4px solid transparent;
  ${({ $up }) => ($up ? 'border-bottom-color: #8b8b8b; border-top: 0;' : 'border-top-color: #8b8b8b; border-bottom: 0;')}
`;

const Check = styled.input.attrs({ type: 'checkbox' })`
  appearance: none;
  width: 13px;
  height: 13px;
  flex: none;
  display: grid;
  place-items: center;
  border: 1px solid #8e8f8f;
  background: linear-gradient(135deg, #d3d6d9, #fafafa);
  box-shadow: inset 0 0 0 1px #f4f4f4;
  &:checked::before {
    content: '';
    width: 4px;
    height: 8px;
    margin-top: -2px;
    border: solid #3c4f96;
    border-width: 0 2px 2px 0;
    transform: rotate(38deg);
  }
`;

const CheckLine = styled.label`
  height: 20px;
  display: flex;
  align-items: center;
  gap: 3px;
`;

const Results = styled.div`
  margin: 10px 0 11px;
`;

const ResultRow = styled.label`
  height: 20px;
  display: grid;
  grid-template-columns: 20px 20px 44px auto;
  align-items: center;
  padding-left: ${({ $nested }) => ($nested ? 40 : 20)}px;
  & > svg { grid-column: 2; }
  & > b { grid-column: 3; }
  & > span { grid-column: 4; }
`;

const Count = styled.b`
  font: bold 11px/13px "DejaVu Sans", sans-serif;
`;

const PanelActions = styled.div`
  display: flex;
  justify-content: flex-end;
`;

const Footer = styled.div`
  display: flex;
  justify-content: flex-end;
  gap: 6px;
  margin-top: 36px;
  padding: 0 15px 1px 0;
`;

const Grip = styled.svg`
  position: absolute;
  right: 8px;
  bottom: 8px;
`;

const pages = [
  ['Diagnostics', <Lens />],
  ['Combined Fix', <><Cube s={0.75} x={1} y={5} left="#dbe9f8" right="#b4cdec" /><Cube s={0.75} x={6} y={2} left="#e3eefa" right="#a6c4e6" /></>],
  null,
  ['Normals', <Cube s={1.08} y={-1} right="#c4202a" />],
  ['Stitching', <><Cube s={0.9} x={2} y={1} /><path d="M12 8 20 5" stroke="#f0dc3c" strokeWidth="3" /></>],
  ['Noise Shells', <><Cube s={1.08} y={-1} /><path d="M5 9h3M6 15h3M14 14h3M18 9h3M16 20h3M9 4h3M16 4h3M5 19h3" stroke="#141a33" strokeWidth="3" /></>],
  ['Holes', <Cube s={1.08} y={-1} top="#c8202a" />],
  ['Triangles', <g fill="#a9b7ea" stroke="#3c4899"><path d="M3 5 12 1 22 4 20 18 12 23 3 17Z" /><path d="M3 5 12 23 12 8ZM12 8 22 4 12 23ZM3 5 12 8" fill="#dfe6fb" /></g>],
  ['Overlaps', <><Cube s={0.85} x={1} /><Cube s={0.8} x={6} y={5} left="#9db2ea" /></>],
  ['Shells', <Cube s={1.08} y={-1} />],
  null,
  ['Profiles', <Page s={0.9} x={2} y={1} lines />],
];

const results = [
  { id: 'normals', count: 0, text: 'inverted normals detected', checked: true },
  { id: 'edges', count: 0, text: 'bad edges detected', checked: true },
  { id: 'contours', count: 0, text: 'bad contours detected', nested: true },
  { id: 'near', count: 0, text: 'near bad edges detected', nested: true, checked: true },
  { id: 'holes', count: 0, text: 'planar holes detected', nested: true, checked: true },
  { id: 'shells', count: 1, text: 'shells detected', checked: true },
  { id: 'noise', count: 0, text: 'possible noise shells detected', nested: true },
  { id: 'overlap', text: 'overlapping triangles detected', checked: false },
  { id: 'intersect', text: 'intersecting triangles detected', checked: false },
];

const FixWizard = () => (
  <Dialog aria-label="Fix Wizard">
    <DialogTitle>
      <Icon $size={16}><path d="M8 2H16V8H22V16H16V22H8V16H2V8H8Z" fill="#d8101c" stroke="#96101c" /></Icon>
      <DialogCaption>Fix Wizard (Part: U detal) &gt; Diagnostics</DialogCaption>
      <Controls inner />
    </DialogTitle>
    <Client>
      <PageList>
        {pages.map((page, i) => (page ? (
          <li key={page[0]}>
            <PageButton $active={i === 0}>
              <Icon $size={20}>{page[1]}</Icon>
              {page[0]}
            </PageButton>
          </li>
        ) : <ListRule key={i} />))}
      </PageList>
      <WizardBody>
        <PartRow>
          <PartLabel htmlFor="part">Current Part:</PartLabel>
          <SelectBox>
            <Select id="part" defaultValue="U detal"><option>U detal</option></Select>
          </SelectBox>
          <PushButton $width={44} disabled><span>Next</span></PushButton>
        </PartRow>
        <Panel>
          <Group $top={7} $gap={6}>
            <Legend>Advice</Legend>
            <AdviceBox>
              <AdviceText>
                No more errors are detected. It seems that the part is ok. Note that not all parameters were analysed.
              </AdviceText>
              <ScrollTrack><ScrollArrow $up /><ScrollArrow /></ScrollTrack>
            </AdviceBox>
          </Group>
          <Group $top={3}>
            <Legend>Diagnostics</Legend>
            <CheckLine><Check />Full Analysis</CheckLine>
            <Results>
              {results.map(({ id, count, text, nested, checked }) => (
                <ResultRow key={id} as={checked === undefined ? 'div' : 'label'} $nested={nested}>
                  {checked !== undefined && <Check defaultChecked={checked} />}
                  {count === undefined ? (
                    <Icon $size={17}><circle cx="12" cy="13" r="2.800" fill="#2f3d9c" /></Icon>
                  ) : (
                    <Icon $size={17}><path d="M0 10 5 8 9 14C12 8 17 2 24 0C18 7 14 14 10 24H7C5 19 3 14 0 10Z" fill="#1f8a4c" /></Icon>
                  )}
                  <Count>{count}</Count>
                  <span>{text}</span>
                </ResultRow>
              ))}
            </Results>
            <PanelActions>
              <PushButton $width={114} $focused><Icon $size={20}><Lens /></Icon><span>Update</span></PushButton>
            </PanelActions>
          </Group>
        </Panel>
        <Footer>
          <PushButton $width={150}>
            <Icon $size={20}>
              <path d="M1 8H12V3L23 12 12 21V16H1Z" fill="#5fd02f" stroke="#267a1b" strokeWidth="1.400" />
            </Icon>
            <span>Follow Advice</span>
          </PushButton>
          <PushButton $width={58}><span>Close</span></PushButton>
          <PushButton $width={58}><span>Help</span></PushButton>
        </Footer>
      </WizardBody>
    </Client>
    <Grip width="12" height="12"><path d="M0 12 12 0M4 12 12 4M8 12 12 8" stroke="#8d8d8d" /></Grip>
  </Dialog>
);

/* ---------- status bar and taskbar ---------- */

const StatusBar = styled.div`
  height: 18px;
  padding-left: 2px;
  background: #f0edec;
  line-height: 20px;
`;

const TaskBar = styled.footer`
  height: 40px;
  display: flex;
  align-items: stretch;
  border-top: 1px solid #1b3a5a;
  background:
    linear-gradient(rgba(255, 255, 255, 0.35), transparent 3px),
    linear-gradient(90deg, transparent 490px, #7395c0 492px 512px, #66909c 520px 540px, #8b9ccc 550px 566px, #74afc8 573px 590px, #a8d0f4 599px 618px, #9cc6ee 622px, #aed6f8 626px 650px, #9fc9f0 654px, #b2d9fa 660px 692px, #5b7da5 697px 701px, transparent 704px),
    linear-gradient(90deg, #1c6299 0, #4792c6 5%, #2577b0 8%, #4aa0d6 37%, #3f97d0 42%, #3087c8 48%, #2781cb 55%, #2071b8 62%, #2e7cc4 67%, #1c69b3 70%, #1c5ba5 83%, #2a66a8 86%, #1e4b80 88%, #1b4273 100%);
`;

const StartButton = styled.button`
  width: 54px;
  padding: 0;
  border: 0;
  background: none;
  display: grid;
  place-items: center;
`;

const Apps = styled.div`
  display: flex;
  gap: 4px;
  padding-left: 6px;
`;

const AppButton = styled.button`
  width: 58px;
  padding: 0 ${({ $stacked }) => ($stacked ? 8 : 0)}px 0 0;
  display: grid;
  place-items: center;
  border: 1px solid ${({ $plain }) => ($plain ? 'transparent' : '#164a6c')};
  border-radius: 3px;
  background: ${({ $plain, $active }) => ($plain ? 'none' : $active
    ? 'radial-gradient(circle at 50% 90%, #d9c4cc, #d6dbe4 60%, #e9f1f8)'
    : 'linear-gradient(160deg, #93cfe6, #55b3da 45%, #3d9fd0 50%, #49b4e0)')};
  box-shadow: ${({ $plain, $stacked }) => ($plain ? 'none' : `inset 0 0 0 1px rgba(255, 255, 255, 0.5)${$stacked ? ', inset -7px 0 0 #5fb3d8, inset -8px 0 0 #1b5c84' : ''}`)};
`;

const Streak = styled.svg`
  width: 84px;
  height: 39px;
  margin: 0 324px 0 auto;
  filter: blur(2px);
`;

const Tray = styled.div`
  display: flex;
  align-items: center;
  gap: 7px;
  color: #fff;
`;

const Clock = styled.time`
  width: 76px;
  text-align: center;
  white-space: pre-line;
  font: 12px/17px Roboto, sans-serif;
`;

const ShowDesktop = styled.button`
  width: 14px;
  padding: 0;
  border: 1px solid #7d9ab8;
  background: linear-gradient(135deg, #8fa9c4, #2d5078 50%, #1c3d66);
`;

const Art = styled.svg`
  width: ${({ $w }) => $w || 34}px;
  height: ${({ $w }) => $w || 34}px;
  display: block;
`;

const taskIcons = {
  chrome: (
    <>
      <path d="M4 12A15 15 0 0 1 31 11L17 11A7 7 0 0 0 11 15Z" fill="#df4332" />
      <path d="M4 11 11 22A7 7 0 0 0 18 24L14 32A15 15 0 0 1 4 11Z" fill="#32a350" />
      <path d="M31 11A15 15 0 0 1 14 32L23 20A7 7 0 0 0 20 11Z" fill="#fbc916" />
      <circle cx="17" cy="17" r="7" fill="#fff" />
      <circle cx="17" cy="17" r="5.500" fill="#3f7de8" />
    </>
  ),
  explorer: (
    <>
      <path d="M3 5H12L14 3H22L23 6H31V30H3Z" fill="#e5cf7c" stroke="#a18a3c" />
      <path d="M3 12H31V30H3Z" fill="#f8ecad" stroke="#c5ac58" />
      <path d="M6 7H28M6 10H28" stroke="#fffbe0" strokeWidth="2" />
      <path d="M8 32V22C8 20 26 20 26 22V32H22V26H12V32Z" fill="#9fd4f0" stroke="#4f9cc8" />
    </>
  ),
  paint: (
    <>
      <path d="M3 19C4 10 16 6 24 11C30 15 29 28 20 31C14 32 17 26 12 27C6 28 2 25 3 19Z" fill="#dbe8f4" stroke="#7f9cb8" />
      <circle cx="9" cy="19" r="2.500" fill="#d73f3f" />
      <circle cx="14" cy="14" r="2.500" fill="#4bb254" />
      <circle cx="20" cy="14" r="2.500" fill="#f0c93b" />
      <circle cx="12" cy="24" r="2.500" fill="#3f6fd7" />
      <path d="M29 5 21 32" stroke="#d0812c" strokeWidth="3" />
      <path d="M27 9C26 4 29 3 32 1C33 5 33 8 30 10Z" fill="#b08b64" />
    </>
  ),
  v8: (
    <>
      <circle cx="17" cy="17" r="15" fill="#27b2cf" />
      <g fill="none" stroke="#dff8fd" strokeWidth="1.600">
        <path d="M3 15 8 25 13 15" />
        <circle cx="23" cy="8" r="4.500" />
        <circle cx="23" cy="19" r="6.500" />
      </g>
      <circle cx="14" cy="24" r="1" fill="#dff8fd" />
    </>
  ),
  rhino: (
    <>
      <path d="M1 1H33V33H1Z" fill="#0d0d0d" />
      <path d="M1 10C5 7 8 13 11 16C17 20 24 18 28 13C30 17 28 23 24 28L16 33C12 30 9 28 7 23C5 18 3 14 1 10Z" fill="#f4f4f4" />
      <path d="M9 18 18 24 15 28C12 26 10 22 9 18Z" fill="#0d0d0d" />
      <path d="M20 20 24 18 21 24Z" fill="#0d0d0d" />
    </>
  ),
  viewer: (
    <>
      <circle cx="17" cy="17" r="16" fill="#fff" />
      <circle cx="17" cy="17" r="11" fill="none" stroke="#1877d8" strokeWidth="8" />
      <circle cx="17" cy="17" r="6.500" fill="#26364f" />
      <path d="M17 3 24 12M30 12 23 22M27 28 16 24M12 31 10 20M3 20 11 12M7 6 18 9" stroke="#fff" strokeWidth="1.500" />
    </>
  ),
  magics: (
    <>
      <path d="M8 5 20 1 28 24 17 33 6 27 12 18Z" fill="#e02414" />
      <path d="M8 5 20 1 21 12 13 19Z" fill="#f4492e" />
      <path d="M13 23 21 13 23 23 19 20Z" fill="#f7e3de" />
      <path d="M17 33 28 24 28 28 18 34Z" fill="#8e150c" />
    </>
  ),
};

const running = [
  ['Google Chrome', 'chrome', { $plain: true }],
  ['Explorer', 'explorer', {}],
  ['Paint', 'paint', {}],
  ['V8', 'v8', {}],
  ['Rhinoceros', 'rhino', { $stacked: true }],
  ['Viewer', 'viewer', {}],
  ['Magics', 'magics', { $active: true }],
];

const Orb = () => (
  <Art $w={36} viewBox="0 0 36 36" aria-hidden>
    <circle cx="18" cy="18" r="17" fill="#2b6d96" stroke="#9fc9de" />
    <path d="M3 15A15 14 0 0 1 33 15C26 20 10 20 3 15Z" fill="#a9d2e4" opacity="0.6" />
    <path d="M9 11C12 9 15 9 17 11L16 18C14 16 11 16 8 18Z" fill="#ef6a2c" />
    <path d="M19 11C22 13 25 13 28 11L26 18C23 20 20 20 18 18Z" fill="#8dc63c" />
    <path d="M8 20C11 18 14 18 16 20L15 27C12 25 9 25 7 26Z" fill="#4ba6e4" />
    <path d="M18 20C20 22 23 22 26 20L25 27C22 29 19 29 17 27Z" fill="#fbd13c" />
  </Art>
);

const App = () => (
  <Shell>
    <GlobalStyle />
    <TitleBar>
      <AppLogo preserveAspectRatio="none">
        <path d="M0 0H24V24H0Z" fill="#dc2420" />
        <path d="M6 22 9 10 19 4 13 16Z" fill="#fff" />
      </AppLogo>
      <Caption>U detal - Magics 19.01</Caption>
      <Controls />
    </TitleBar>
    <MenuBar>
      {menus.map(([name, width]) => <MenuItem key={name} $width={width}>{name}</MenuItem>)}
    </MenuBar>
    <ToolArea>
      <ToolRow>
        <Tools groups={fileTools} />
        <TabStrip role="tablist">
          {tabs.map(([name, width], i) => (
            <Tab key={name} role="tab" aria-selected={i === 0} $active={i === 0} $width={width}>{name}</Tab>
          ))}
        </TabStrip>
      </ToolRow>
      <ToolEnd>
        <ToolRow><Tools groups={partTools} /></ToolRow>
      </ToolEnd>
    </ToolArea>
    <Workspace>
      <SceneColumn>
        <Scene>
          <Model />
          <AxisTriad />
          <FixWizard />
        </Scene>
        <RulerScale />
      </SceneColumn>
      <Dock />
    </Workspace>
    <StatusBar>Ready</StatusBar>
    <TaskBar>
      <StartButton aria-label="Start"><Orb /></StartButton>
      <Apps>
        {running.map(([name, art, look]) => (
          <AppButton key={name} aria-label={name} {...look}>
            <Art viewBox="0 0 34 34">{taskIcons[art]}</Art>
          </AppButton>
        ))}
      </Apps>
      <Streak viewBox="0 0 84 39" preserveAspectRatio="none" aria-hidden><path d="M2 0H22L82 39H58Z" fill="#a9d4fa" /></Streak>
      <Tray>
        <Art $w={12} viewBox="0 0 12 12"><path d="M2 9 6 4 10 9Z" fill="#fff" /></Art>
        <Art $w={18} viewBox="0 0 34 34">{taskIcons.v8}</Art>
        <Art $w={18} viewBox="0 0 18 18">
          <path d="M1 1H17V17H1Z" fill="#e9e9ef" />
          <path d="M3 4H15M3 7H15M3 10H15M3 13H15" stroke="#c63a44" strokeWidth="1.500" />
          <path d="M3 3H10V9H3Z" fill="#23307e" />
        </Art>
        <Art $w={18} viewBox="0 0 18 18">
          <path d="M5 5H16V14H5Z" fill="#3c4a60" stroke="#fff" />
          <path d="M1 1V5H5V1M3 5V12M7 17H14" fill="none" stroke="#fff" strokeWidth="1.500" />
          <path d="M10 10 16 16M16 10 10 16" stroke="#d02424" strokeWidth="2.500" />
        </Art>
        <Art $w={18} viewBox="0 0 18 18">
          <path d="M2 6H5L9 2V16L5 12H2Z" fill="#fff" />
          <path d="M11 6Q13 9 11 12M13 4Q17 9 13 14" fill="none" stroke="#fff" />
        </Art>
        <Clock>{'12:58\n19.09.2024'}</Clock>
      </Tray>
      <ShowDesktop aria-label="Show desktop" />
    </TaskBar>
  </Shell>
);

export default App;
